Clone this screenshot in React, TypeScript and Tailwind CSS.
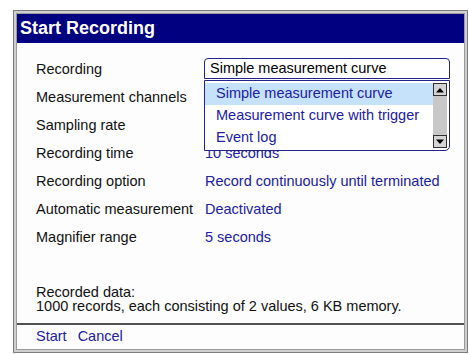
import React from "react";

const rows: { label: string; value: string }[] = [
  { label: "Recording", value: "" },
  { label: "Measurement channels", value: "" },
  { label: "Sampling rate", value: "" },
  { label: "Recording time", value: "10 seconds" },
  { label: "Recording option", value: "Record continuously until terminated" },
  { label: "Automatic measurement", value: "Deactivated" },
  { label: "Magnifier range", value: "5 seconds" },
];

const options = ["Simple measurement curve", "Measurement curve with trigger", "Event log"];

function Arrow({ up }: { up?: boolean }) {
  return (
    <div className="w-[14px] h-[13px] bg-[#d4d4d4] border border-[#303030] flex items-center justify-center">
      <svg width="10" height="6" viewBox="0 0 10 6">
        {up ? <path d="M1 5.5 L5 1 L9 5.5 Z" fill="#000" /> : <path d="M1 0.5 L9 0.5 L5 5 Z" fill="#000" />}
      </svg>
    </div>
  );
}

function Dropdown() {
  return (
    <div className="relative">
      <div className="mt-[2px] w-[246px] h-[21px] border border-[#23238c] rounded-t-[4px] bg-white pl-[5px] flex items-center text-black">
        Simple measurement curve
      </div>
      <div className="absolute left-0 top-[22px] z-10 w-[246px] h-[71px] border-[1.5px] border-[#23238c] rounded-br-[5px] bg-white flex pt-[2px] pr-[2px] pb-[2px]">
        <div className="flex-1 flex flex-col">
          {options.map((o, i) => (
            <div
              key={o}
              className={`h-[22px] pl-[11px] flex items-center text-[#2020a0] ${i === 0 ? "bg-[#c6e2fb]" : ""}`}
            >
              {o}
            </div>
          ))}
        </div>
        <div className="w-[14px] flex flex-col bg-[#c8c8c8]">
          <Arrow up />
          <div className="flex-1" />
          <Arrow />
        </div>
      </div>
    </div>
  );
}

export default function App() {
  return (
    <div className="w-[469px] h-[354px] bg-white overflow-hidden font-['Liberation_Sans',Arial,sans-serif] text-[14.5px]">
      <div className="ml-[13px] mt-[10px] w-[455px] h-[343px] border border-[#7c7c7c] bg-[#cfcfcf] p-[2px]">
        <div className="h-full border border-[#9a9a9a] bg-[#fdfdfd] flex flex-col">
          <div className="h-[29px] bg-[#000080] text-white font-bold text-[18px] pl-[3px] flex items-center">
            Start Recording
          </div>
          <div className="pt-[13px]">
            {rows.map((r, i) => (
              <div key={r.label} className="h-[28px] flex items-center">
                <div className="w-[187px] pl-[19px] text-[#111]">{r.label}</div>
                {i === 0 ? (
                  <div className="self-start">
                    <Dropdown />
                  </div>
                ) : (
                  r.value && <div className="pl-px text-[#2020a0]">{r.value}</div>
                )}
              </div>
            ))}
          </div>
          <div className="flex-1" />
          <div className="pl-[19px] pb-[10px] leading-[14px] text-[#111]">
            <div>Recorded data:</div>
            <div>1000 records, each consisting of 2 values, 6 KB memory.</div>
          </div>
          <div className="h-[2px] bg-[#505050]" />
          <div className="h-[24px] pl-[19px] flex items-center gap-[11px] text-[#2020a0]">
            <span>Start</span>
            <span>Cancel</span>
          </div>
        </div>
      </div>
    </div>
  );
}
